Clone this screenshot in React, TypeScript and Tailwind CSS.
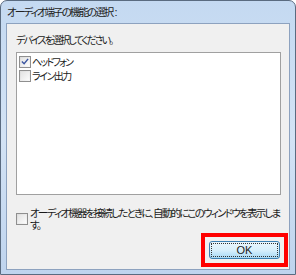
import React from "react";

function Check({ checked }: { checked?: boolean }) {
  return (
    <div className="w-[12px] h-[12px] shrink-0 border border-[#8f8f8f] bg-gradient-to-br from-[#dcdcdc] to-[#f8f8f8] p-[1px]">
      <div className="w-full h-full bg-gradient-to-br from-[#e4e4e4] to-[#fbfbfb] flex items-center justify-center">
        {checked && (
          <svg width="9" height="9" viewBox="0 0 9 9">
            <path d="M1 4.5 L3.5 7 L8 1.5" stroke="#3b55a0" strokeWidth="1.6" fill="none" />
          </svg>
        )}
      </div>
    </div>
  );
}

export default function App() {
  return (
    <div className="w-[296px] h-[275px] flex flex-col border border-[#5a6b80] rounded-t-[7px] bg-gradient-to-b from-[#c4d9f1] via-[#d3e3f5] to-[#bfd4ee] text-[#1a1a1a] font-['Noto_Sans_CJK_JP','Noto_Sans',sans-serif] [font-feature-settings:'palt']">
      <div className="h-[22px] px-[6px] flex items-center text-[10.5px] text-[#222] whitespace-nowrap">
        <span className="tracking-[-1.9px]">オーディオ端子の機能の選択</span>
        <span className="ml-[2px] font-['Liberation_Sans',sans-serif] text-[11px]">:</span>
      </div>
      <div className="flex-1 mx-[5px] mb-[4px] border border-[#8da2bf] bg-[#f0f0f0] flex flex-col pl-[9px] pr-[8px]">
        <div className="h-[28px] flex items-center text-[10px] tracking-[-1.9px] pt-[2px] whitespace-nowrap">
          デバイスを選択してください。
        </div>
        <div className="h-[143px] border border-[#a0a0a0] bg-white px-[2px] py-[2px] flex flex-col gap-[1px]">
          <div className="flex items-center gap-[1px] text-[10px] h-[13px] tracking-[-1.8px] whitespace-nowrap">
            <Check checked />
            <span>ヘッドフォン</span>
          </div>
          <div className="flex items-center gap-[1px] text-[10px] h-[13px] tracking-[-1.5px] whitespace-nowrap">
            <Check />
            <span>ライン出力</span>
          </div>
        </div>
        <div className="mt-[12px] flex items-center gap-[2px]">
          <Check />
          <div className="text-[10.5px] leading-[12px] tracking-[-1.75px]">
            <div className="whitespace-nowrap">オーディオ機器を接続したときに、自動的にこのウィンドウを表示しま</div>
            <div>す。</div>
          </div>
        </div>
        <div className="mt-[2px] flex justify-end -mr-[7px]">
          <div className="border-[4px] border-[#ff0000] w-[87px] h-[34px] flex items-center justify-center">
            <div className="w-[71px] h-[18px] rounded-[3px] border border-[#3c7fb1] bg-gradient-to-b from-[#eaf6fd] via-[#d9f0fc] to-[#a7d9f5] p-[1px]">
              <div className="w-full h-full border border-dotted border-[#333] flex items-center justify-center text-[11px] leading-none font-['Liberation_Sans',sans-serif]">
                OK
              </div>
            </div>
          </div>
        </div>
      </div>
    </div>
  );
}
